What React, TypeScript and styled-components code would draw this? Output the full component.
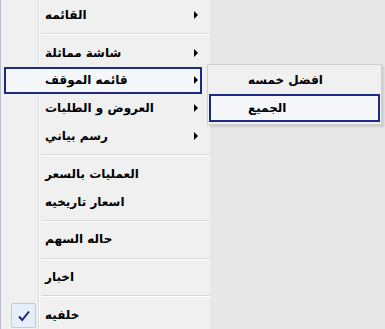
import styled, { createGlobalStyle } from "styled-components";

type Entry =
  | { kind: "item"; label: string; arrow?: boolean; active?: boolean; checked?: boolean }
  | { kind: "sep" };

const MENU: Entry[] = [
  { kind: "item", label: "القائمه", arrow: true },
  { kind: "sep" },
  { kind: "item", label: "شاشة مماثلة", arrow: true },
  { kind: "item", label: "قائمه الموقف", arrow: true, active: true },
  { kind: "item", label: "العروض و الطلبات", arrow: true },
  { kind: "item", label: "رسم بياني", arrow: true },
  { kind: "sep" },
  { kind: "item", label: "العمليات بالسعر" },
  { kind: "item", label: "اسعار تاريخيه" },
  { kind: "sep" },
  { kind: "item", label: "حاله السهم" },
  { kind: "sep" },
  { kind: "item", label: "اخبار" },
  { kind: "sep" },
  { kind: "item", label: "خلفيه", checked: true },
];

const SUBMENU = [
  { label: "افضل خمسه", active: false },
  { label: "الجميع", active: true },
];

const GlobalStyle = createGlobalStyle`
  html, body {
    margin: 0;
    padding: 0;
    width: 385px;
    height: 329px;
    overflow: hidden;
    background: #e8e8e8;
  }
`;

const Page = styled.div`
  position: relative;
  width: 385px;
  height: 329px;
  display: flex;
  align-items: flex-start;
  font-family: "DejaVu Sans", sans-serif;
  font-weight: bold;
  font-size: 12px;
  color: #000;
`;

const Menu = styled.div`
  position: relative;
  width: 210px;
  height: 329px;
  background: #f0f0f0;
  border-left: 1px solid #b9b9cf;
  display: flex;
  flex-direction: column;
  padding-top: 1px;
  box-sizing: border-box;

  &::before {
    content: "";
    position: absolute;
    top: 0;
    bottom: 0;
    left: 37px;
    width: 1px;
    background: #dcdcdc;
    box-shadow: 1px 0 0 #fff;
  }
`;

const Row = styled.div<{ $active?: boolean }>`
  position: relative;
  height: 28px;
  margin: 0 8px 0 3px;
  display: flex;
  align-items: center;
  box-sizing: border-box;
  border: 2px solid ${({ $active }) => ($active ? "#1b2a82" : "transparent")};
  background: ${({ $active }) => ($active ? "#f6f7fb" : "transparent")};
  z-index: 1;
`;

const Gutter = styled.div`
  width: 32px;
  height: 100%;
  display: flex;
  align-items: center;
  justify-content: center;
  flex-shrink: 0;
`;

const CheckBox = styled.div`
  width: 25px;
  height: 25px;
  margin-left: 3px;
  margin-top: 2px;
  box-sizing: border-box;
  border: 1px solid #b8cde6;
  border-radius: 2px;
  background: #e6eef9;
  display: flex;
  align-items: center;
  justify-content: center;
`;

const Label = styled.span`
  margin-left: 7px;
  white-space: nowrap;
  flex: 1;
  text-align: left;
`;

const Arrow = styled.span`
  width: 0;
  height: 0;
  margin-right: 2px;
  border-top: 4px solid transparent;
  border-bottom: 4px solid transparent;
  border-left: 4px solid #000;
`;

const Separator = styled.div`
  height: 10px;
  display: flex;
  align-items: center;
  padding-left: 40px;

  &::after {
    content: "";
    flex: 1;
    height: 1px;
    background: #d8d8d8;
    box-shadow: 0 1px 0 #fff;
  }
`;

const SubMenu = styled.div`
  position: absolute;
  left: 207px;
  top: 64px;
  width: 175px;
  padding: 1px 0 2px;
  box-sizing: border-box;
  background: #f0f0f0;
  border: 1px solid #cfcfcf;
  box-shadow: 2px 2px 2px rgba(0, 0, 0, 0.12);
  display: flex;
  flex-direction: column;
  z-index: 2;
`;

const SubRow = styled.div<{ $active?: boolean }>`
  height: 28px;
  margin: 0 1px;
  display: flex;
  align-items: center;
  box-sizing: border-box;
  padding-left: 37px;
  border: 2px solid ${({ $active }) => ($active ? "#1b2a82" : "transparent")};
  background: ${({ $active }) => ($active ? "#f6f7fb" : "transparent")};
  white-space: nowrap;
`;

const Check = () => (
  <svg width="14" height="14" viewBox="0 0 14 14">
    <path d="M2 7.5 L5.2 11 L12 2.5" fill="none" stroke="#1a2580" strokeWidth="2" />
  </svg>
);

export default function App() {
  return (
    <>
      <GlobalStyle />
      <Page>
        <Menu>
          {MENU.map((entry, i) =>
            entry.kind === "sep" ? (
              <Separator key={i} />
            ) : (
              <Row key={i} $active={entry.active}>
                <Gutter>
                  {entry.checked && (
                    <CheckBox>
                      <Check />
                    </CheckBox>
                  )}
                </Gutter>
                <Label>{entry.label}</Label>
                {entry.arrow && <Arrow />}
              </Row>
            )
          )}
        </Menu>
        <SubMenu>
          {SUBMENU.map((s) => (
            <SubRow key={s.label} $active={s.active}>
              {s.label}
            </SubRow>
          ))}
        </SubMenu>
      </Page>
    </>
  );
}
